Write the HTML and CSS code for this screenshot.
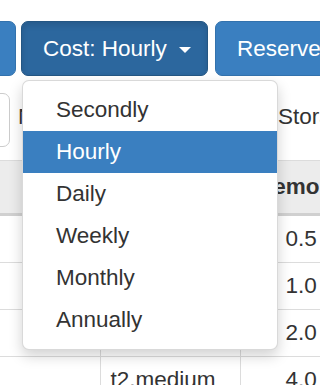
FILE: index.html
```html
<!DOCTYPE html>
<html lang="en">
<head>
  <meta charset="UTF-8" />
  <meta name="viewport" content="width=device-width, initial-scale=1.0"/>
  <title>Instances</title>
  <link rel="stylesheet" href="styles.css">
</head>
<body>
  <div class="page">
    <div class="toolbar">
      <button class="btn btn-cut">Region</button>
      <div class="dropdown">
        <button class="btn btn-active">Cost: Hourly <span class="caret"></span></button>
        <ul class="dropdown-menu">
          <li>Secondly</li>
          <li class="selected">Hourly</li>
          <li>Daily</li>
          <li>Weekly</li>
          <li>Monthly</li>
          <li>Annually</li>
        </ul>
      </div>
      <button class="btn btn-reserved">Reserved</button>
    </div>

    <div class="filters">
      <input class="search" type="text" />
      <span class="label">Name</span>
      <span class="label label-storage">Storage</span>
    </div>

    <table class="instances">
      <colgroup>
        <col class="col-name" />
        <col class="col-api" />
        <col class="col-mem" />
      </colgroup>
      <thead>
        <tr><th></th><th>API Name</th><th>Memory</th></tr>
      </thead>
      <tbody>
        <tr><td></td><td>t2.nano</td><td class="num">0.5</td></tr>
        <tr><td></td><td>t2.micro</td><td class="num">1.0</td></tr>
        <tr><td></td><td>t2.small</td><td class="num">2.0</td></tr>
        <tr><td></td><td>t2.medium</td><td class="num">4.0</td></tr>
      </tbody>
    </table>
  </div>
</body>
</html>
```

FILE: styles.css
```css
body {
  margin: 0;
  font-family: "Liberation Sans", Arial, sans-serif;
  font-size: 22.5px;
  color: #333;
  background: #fff;
  overflow: hidden;
}
.page {
  width: 320px;
  height: 385px;
  overflow: hidden;
}
.toolbar {
  display: flex;
  gap: 5px;
  padding-top: 21px;
  white-space: nowrap;
}
.btn {
  height: 55px;
  padding: 0 21px;
  font-family: inherit;
  font-size: 22.5px;
  color: #fff;
  background-color: #3a7fc0;
  border: 1px solid #3372ad;
  border-radius: 7px;
  flex-shrink: 0;
}
.btn-cut {
  width: 140px;
  margin-left: -124px;
  text-align: left;
}
.btn-active {
  width: 187px;
  background-color: #2c679e;
  border-color: #245683;
  box-shadow: inset 0 3px 6px rgba(0,0,0,0.12);
}
.btn-reserved {
  margin-left: 2px;
}
.caret {
  display: inline-block;
  margin-left: 6px;
  vertical-align: middle;
  border-top: 6px solid #fff;
  border-left: 6px solid transparent;
  border-right: 6px solid transparent;
}
.dropdown {
  position: relative;
  flex-shrink: 0;
}
.dropdown-menu {
  position: absolute;
  top: 59px;
  left: 1px;
  z-index: 10;
  width: 254px;
  margin: 0;
  padding: 8px 0;
  list-style: none;
  background: #fff;
  border: 1px solid rgba(0,0,0,0.15);
  border-radius: 7px;
  box-shadow: 0 6px 14px rgba(0,0,0,0.18);
}
.dropdown-menu li {
  height: 42px;
  line-height: 42px;
  padding: 0 33px;
  color: #333;
}
.dropdown-menu li.selected {
  background-color: #3a7fc0;
  color: #fff;
}
.filters {
  display: flex;
  align-items: center;
  margin-top: 17px;
  height: 54px;
  white-space: nowrap;
}
.search {
  width: 60px;
  height: 54px;
  box-sizing: border-box;
  margin: 0 0 0 -50px;
  border: 1px solid #ccc;
  border-radius: 7px;
  flex-shrink: 0;
}
.label {
  margin-left: 8px;
  margin-top: -6px;
}
.label-storage {
  margin-left: 200px;
}
.instances {
  margin-top: 13px;
  border-collapse: collapse;
  table-layout: fixed;
  width: 520px;
}
.col-name { width: 100px; }
.col-api { width: 140px; }
.col-mem { width: 280px; }
.instances th,
.instances td {
  text-align: left;
  white-space: nowrap;
  overflow: hidden;
}
.instances th {
  height: 52px;
  padding: 0 14px;
  font-weight: bold;
  background: #ececec;
  border-top: 1px solid #dcdcdc;
  border-bottom: 3px solid #d0d0d0;
  border-right: 1px solid #dcdcdc;
}
.instances td {
  height: 46px;
  padding: 0 10px;
  border-bottom: 1px solid #dcdcdc;
  border-right: 1px solid #dcdcdc;
}
.instances td.num {
  padding-left: 45px;
}
```
